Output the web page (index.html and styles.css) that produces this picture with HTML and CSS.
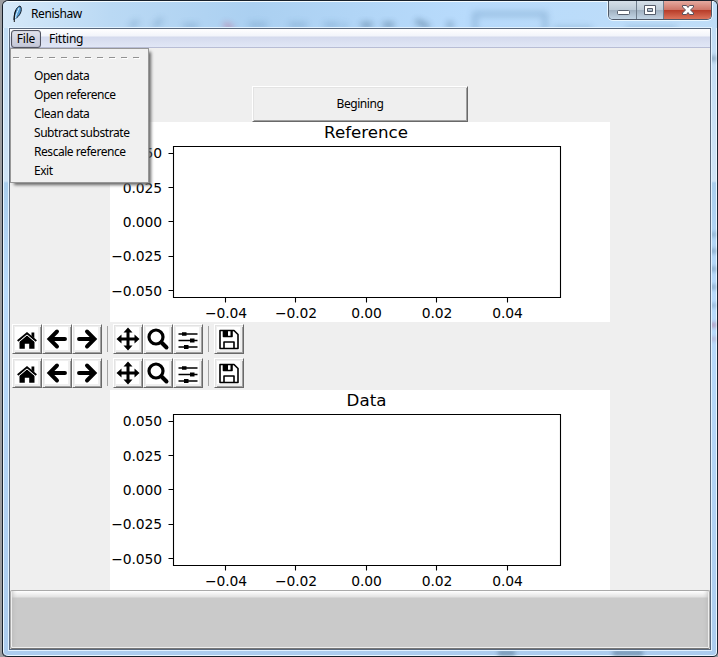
FILE: index.html
```
<!DOCTYPE html>
<html lang="en">
<head>
<meta charset="utf-8">
<title>Renishaw</title>
<link rel="stylesheet" href="styles.css">
</head>
<body>
<div class="window">
  <svg class="edge" width="714" height="655" aria-hidden="true"><path d="M710 232v3M710 248v4M710 266v4M710 284v4M710 303v3M710 55v5M495 652h17M610 652h30"/><path class="rose" d="M710 322v4M710 337v2"/></svg>
  <header class="titlebar">
    <svg class="backdrop" width="712" height="27" aria-hidden="true">
      <g class="smudges">
        <path d="M126 25l8-6M150 25l8-8M179 24h15M245 23h18M285 23h18M320 23h15M338 24h5"/>
        <path class="dark" d="M357 23h11M379 23h11M412 19l13 6M446 20v6"/>
        <path class="rose" d="M220 22l9 5"/>
        <path d="M471 12h70v20h-70zM550 27h38M622 27h50"/>
      </g>
    </svg>
    <svg class="feather" width="12" height="18" viewBox="0 0 12 18"><path d="M2 15C2 8 4 2 8 1c2.500 2 1.500 8-3.500 12" fill="#559bd2" stroke="#111b28"/><path d="M3.500 13C4 9 6 6 7 3" fill="none" stroke="#d5f0ff"/><path d="M2.300 17C2 12 2.500 8 4 5" fill="none" stroke="#111"/></svg>
    <span class="title">Renishaw</span>
    <div class="controls">
      <span class="control minimize"><svg width="28" height="18"><rect x="8.500" y="9.500" width="12" height="4" rx="1" fill="#fff" stroke="#555d6b"/></svg></span>
      <span class="control maximize"><svg width="27" height="18"><path d="M7.500 4.500h11v9h-11zM10.500 7.500v3h5v-3z" fill="#fff" fill-rule="evenodd" stroke="#555d6b"/></svg></span>
      <span class="control close"><svg width="47" height="18"><path d="M18.500 4.500h4l1.500 2 1.500-2h4v1.500L26.500 9l3 3v1.500h-4l-1.500-2-1.500 2h-4V12l3-3-3-3z" fill="#fff" stroke="#58515d"/></svg></span>
    </div>
  </header>
  <main class="client">
    <nav class="menubar"><span class="menu-title active">File</span><span class="menu-title">Fitting</span></nav>
    <div class="menu">
      <div class="tearoff"></div>
      <div class="item"><span>Open data</span></div>
      <div class="item"><span>Open reference</span></div>
      <div class="item"><span>Clean data</span></div>
      <div class="item"><span>Subtract substrate</span></div>
      <div class="item"><span>Rescale reference</span></div>
      <div class="item"><span>Exit</span></div>
    </div>
    <div class="content">
      <button class="begin">Begining</button>
      <svg class="figure" id="reference" width="500" height="200"><text class="heading" x="256" y="16">Reference</text><use href="#axes"/></svg>
      <div class="toolbars">
        <div class="toolbar">
          <span class="tool"><svg><use href="#home"/></svg></span><span class="tool"><svg><use href="#back"/></svg></span><span class="tool"><svg><use href="#forward"/></svg></span><i class="separator"></i>
          <span class="tool"><svg><use href="#move"/></svg></span><span class="tool"><svg><use href="#search"/></svg></span><span class="tool"><svg><use href="#sliders"/></svg></span><i class="separator"></i>
          <span class="tool"><svg><use href="#save"/></svg></span>
        </div>
        <div class="toolbar">
          <span class="tool"><svg><use href="#home"/></svg></span><span class="tool"><svg><use href="#back"/></svg></span><span class="tool"><svg><use href="#forward"/></svg></span><i class="separator"></i>
          <span class="tool"><svg><use href="#move"/></svg></span><span class="tool"><svg><use href="#search"/></svg></span><span class="tool"><svg><use href="#sliders"/></svg></span><i class="separator"></i>
          <span class="tool"><svg><use href="#save"/></svg></span>
        </div>
      </div>
      <svg class="figure" id="data" width="500" height="200">
        <text class="heading" x="256.500" y="16">Data</text>
        <g id="axes">
          <path d="M63.500 24.500h387v151h-387zM58.500 31.500h5M58.500 65.500h5M58.500 99.500h5M58.500 134.500h5M58.500 168.500h5M115.500 175.500v5M185.500 175.500v5M256.500 175.500v5M326.500 175.500v5M397.500 175.500v5" fill="none" stroke="#000" stroke-width="1.100"/>
          <g class="y-labels"><text x="52" y="36">0.050</text><text x="52" y="71">0.025</text><text x="52" y="105">0.000</text><text x="52" y="139">−0.025</text><text x="52" y="174">−0.050</text></g>
          <g class="x-labels"><text x="116" y="196">−0.04</text><text x="186" y="196">−0.02</text><text x="256.500" y="196">0.00</text><text x="327" y="196">0.02</text><text x="397.500" y="196">0.04</text></g>
        </g>
      </svg>
    </div>
    <footer class="status"></footer>
  </main>
</div>
<svg class="symbols" aria-hidden="true">
  <symbol id="home" viewBox="0 0 24 24"><path d="M4.500 14.500L12 8.300l7.500 6.200v7.300h-5.300v-5H9.800v5H4.500z"/><path d="M2.700 14L12 6.200 21.300 14" fill="none" stroke="#000" stroke-width="2"/><path d="M16.500 5.500h2.800v6l-2.800-2.500z"/><path d="M3.600 15.200L12 8l8.400 7.200" fill="none" stroke="#fff" stroke-width=".8"/></symbol>
  <symbol id="back" viewBox="0 0 24 24"><path d="M12 4.500L4.500 12l7.500 7.500M5 12h15" fill="none" stroke="#000" stroke-width="3.900" stroke-linecap="round"/></symbol>
  <symbol id="forward" viewBox="0 0 24 24"><path d="M12 4.500l7.500 7.500-7.500 7.500M19 12H4" fill="none" stroke="#000" stroke-width="3.900" stroke-linecap="round"/></symbol>
  <symbol id="move" viewBox="0 0 24 24"><path d="M12 .5l4.500 5h-3v5h5v-3l5 4.500-5 4.500v-3h-5v5h3l-4.500 5-4.500-5h3v-5h-5v3l-5-4.500 5-4.500v3h5v-5h-3z"/></symbol>
  <symbol id="search" viewBox="0 0 24 24"><circle cx="10" cy="10" r="7" fill="none" stroke="#000" stroke-width="3.200"/><path d="M15.500 15.500l5 5" stroke="#000" stroke-width="4" stroke-linecap="round"/></symbol>
  <symbol id="sliders" viewBox="0 0 24 24"><path d="M2.500 7h19M2.500 13.500h19M2.500 20h19" stroke="#000" stroke-width="1.600"/><path d="M6 5.200h4.500v3.600H6zM14 11.500h4.500v4H14zM8 18h4.500v4H8z"/></symbol>
  <symbol id="save" viewBox="0 0 24 24"><path d="M3 3.500h14l4 4v14H3zM7 21.500V15h10v6.500M6.500 3.500v6H15v-6" fill="none" stroke="#000" stroke-width="1.600" stroke-linejoin="round"/><path d="M6.500 3.500H11v6H6.500zM13.500 3.500H15v6h-1.500z"/></symbol>
</svg>
</body>
</html>
```
FILE: styles.css
```
* { box-sizing: border-box; }
body { margin: 0; width: 718px; height: 657px; overflow: hidden; background: #9c9da0; font: 12px/19px "Noto Sans", sans-serif; color: #000; }
svg { display: block; }
.window { position: relative; width: 715px; height: 657px; margin-left: 3px; border: 1px solid #17202b; border-right-color: #1c2531; border-left: 0; border-radius: 6px 6px 5px 5px; overflow: hidden; background: linear-gradient(#bfdcf5 0, #cfe3f5 180px, #aaceed 182px, #b9dbfc 290px, #acccee 100%); box-shadow: -1px 0 #17202b, inset 0 0 0 1px #e9f6ff; }
.edge { position: absolute; left: 0; top: 0; fill: none; stroke: #5d7d98; stroke-width: 6; opacity: .65; filter: blur(2px); }
.edge .rose { stroke: #b0557a; }
.titlebar { height: 27px; display: flex; align-items: flex-start; background: linear-gradient(90deg, #d6e9f9 0, #bad9f4 15%, #abd0f1 35%, #b8dbfc 65%, #bfddf7 100%); border-top: 1px solid #f3fbff; position: relative; }
.backdrop { position: absolute; left: 1px; top: 0; }
.smudges { fill: none; stroke: #6b96bd; stroke-width: 5; opacity: .45; filter: blur(3px); }
.smudges .dark { stroke: #294d6c; }
.smudges .rose { stroke: #c54c75; }
.feather { margin: 3px 0 0 9px; position: relative; }
.title { margin: 2px 0 0 7px; position: relative; letter-spacing: -.42px; }
.controls { display: flex; position: relative; margin: -1px 6px 0 auto; height: 19px; border: 1px solid #505968; border-top: 0; border-radius: 0 0 5px 5px; overflow: hidden; box-shadow: 0 0 0 1px #eaf7ff; }
.control { border-right: 1px solid #6f7d8c; background: linear-gradient(#d5dfe8 0, #bdcbd7 48%, #9fafbf 50%, #c3d5e5 100%); }
.close { border: 0; background: linear-gradient(#e5aaa0 0, #cf7769 48%, #b63a27 50%, #dc745c 100%); }
.minimize { width: 28px; }
.maximize { width: 27px; }
.close { width: 47px; }
.controls { transform: translateX(1px); }
.client { width: 702px; height: 622px; margin-left: 6px; border: 1px solid #59687c; background: #efefef; display: flex; flex-direction: column; position: relative; box-shadow: 0 0 0 1px #e2f2ff; }
.menubar { height: 19px; flex: none; display: flex; border-bottom: 1px solid #b8bdd5; background: linear-gradient(#fff 0, #f2f4fa 7px, #d4daed 8px, #e1e7f6 100%); padding: 1px; }
.menu-title { height: 18px; line-height: 17px; letter-spacing: -.23px; padding-left: 8px; }
.menu-title.active { width: 30px; padding: 0; text-align: center; line-height: 16px; border: 1px solid #515361; border-radius: 3px; background: linear-gradient(#dfe1ea, #c4c7d8); box-shadow: inset 0 0 1px #777; }
.menu { position: absolute; left: 0; top: 19px; width: 139px; height: 135px; background: #f0f0f0; border: 1px solid #979797; box-shadow: 3px 3px 3px -1px #666; padding: 8px 3px 0 2px; }
.tearoff { height: 9px; background: repeating-linear-gradient(90deg, #929292 0 6px, transparent 6px 12px) 0 0 / 127px 1px no-repeat; filter: drop-shadow(1px 1px 0 #fff); }
.item { height: 19px; padding-left: 21px; letter-spacing: -.45px; white-space: nowrap; }
.content { height: 542px; flex: none; display: flex; flex-direction: column; align-items: center; padding-top: 38px; }
.begin { width: 216px; height: 36px; flex: none; border: 1px solid; border-color: #fff #696969 #696969 #fff; background: #efefef; box-shadow: inset 1px 1px #e3e3e3, inset -1px -1px #a0a0a0; font: inherit; letter-spacing: -.43px; padding: 0 0 2px; }
.figure { flex: none; background: #fff; font-family: "DejaVu Sans", sans-serif; font-size: 13.89px; }
.heading { font-size: 16.67px; text-anchor: middle; }
.y-labels { text-anchor: end; letter-spacing: -.1px; }
.x-labels { text-anchor: middle; letter-spacing: -.1px; }
.toolbars { align-self: stretch; height: 68px; flex: none; padding: 2px; display: flex; flex-direction: column; gap: 4px; }
.toolbar { display: flex; height: 30px; }
.tool { width: 30px; height: 30px; display: grid; place-items: center; border: 1px solid; border-color: #fff #696969 #696969 #fff; background: #fff; box-shadow: inset 1px 1px #e3e3e3, inset 2px 2px #efefef, inset -1px -1px #a0a0a0, inset -3px -3px #efefef; }
.tool svg { width: 24px; height: 24px; }
.separator { width: 1px; height: 26px; margin: 2px 5px; background: #a3a3a3; }
.status { height: 59px; border: 1px solid #aaa; border-bottom: 1px solid #777; border-radius: 2px; background: linear-gradient(#fff 0, #e2e2e2 6px, #cacaca 7px, #cacaca 100%); box-shadow: inset 1px -1px 0 #eee, inset -1px 0 #eee, inset 6px 0 5px -5px #b5b5b5, inset -6px 0 5px -5px #b5b5b5; }
.symbols { width: 0; height: 0; position: absolute; }
```
